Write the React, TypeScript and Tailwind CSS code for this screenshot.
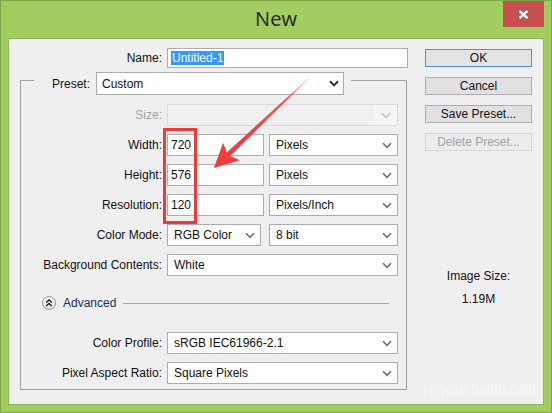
import React from 'react';

type ChevronTone = 'dark' | 'normal' | 'off';

const Chevron = ({ tone = 'normal' }: { tone?: ChevronTone }) => {
  const color = tone === 'dark' ? '#2e2e2e' : tone === 'off' ? '#c2c2c2' : '#6e6e6e';
  return (
    <svg width="10" height="7" viewBox="0 0 10 7" className="shrink-0">
      <path d="M1 1.2 L5 5.4 L9 1.2" fill="none" stroke={color} strokeWidth={tone === 'dark' ? 2 : 1.6} />
    </svg>
  );
};

const Select = ({ value, className }: { value: string; className: string }) => (
  <div className={`flex items-center justify-between border border-[#acacac] bg-white pl-[6px] pr-[5px] ${className}`}>
    <span className="whitespace-nowrap">{value}</span>
    <Chevron />
  </div>
);

const Field = ({ value }: { value: string }) => (
  <div className="flex h-[22px] w-[97px] items-center border border-[#abadb3] bg-white pl-[3px]">{value}</div>
);

const Row = ({ label, children, muted }: { label: string; children: React.ReactNode; muted?: boolean }) => (
  <div className="flex h-[22px] items-center">
    <div className={`w-[141px] text-right whitespace-nowrap ${muted ? 'text-[#a3a3a3]' : ''}`}>{label}</div>
    <div className="ml-[5px] flex h-full items-center">{children}</div>
  </div>
);

const Button = ({ label, kind }: { label: string; kind?: 'default' | 'disabled' }) => {
  const look =
    kind === 'default'
      ? 'border-[#4a8fd8] bg-[#e3e3e3]'
      : kind === 'disabled'
        ? 'border-[#d6d6d6] bg-[#ececec] text-[#a2a2a2]'
        : 'border-[#adadad] bg-[#e1e1e1]';
  return (
    <div className={`flex h-[18px] w-[107px] items-center justify-center border ${look}`}>{label}</div>
  );
};

export default function App() {
  return (
    <div className="relative h-[413px] w-[552px] overflow-hidden font-['Liberation_Sans',Arial,sans-serif] text-[12px] leading-[14px] text-[#111]">
      <div className="flex h-full w-full flex-col border border-[#7da646] bg-[#a2cd5f] px-[7px] pb-[7px]">
        {/* title bar */}
        <div className="grid h-[37px] shrink-0 grid-cols-[1fr_auto_1fr]">
          <div />
          <div className="self-center pb-[1px] font-['Open_Sans',sans-serif] text-[20px] leading-[24px] text-[#222]">New</div>
          <div className="flex h-[26px] w-[41px] items-center justify-center justify-self-end bg-[#c75050]">
            <svg width="11" height="9" viewBox="0 0 11 9">
              <path d="M1.5 0.8 L9.5 8.2 M9.5 0.8 L1.5 8.2" stroke="#fff" strokeWidth="2.3" />
            </svg>
          </div>
        </div>

        {/* client area */}
        <div className="flex flex-1 border border-[#8ab653] bg-[#efefef] pl-[11px] pt-[9px]">
          <div className="w-[388px]">
            <div className="flex h-[20px] items-center">
              <div className="w-[142px] text-right">Name:</div>
              <div className="ml-[5px] flex h-full w-[241px] items-center border border-[#abadb3] bg-white pl-[3px]">
                <span className="bg-[#3399ff] px-[1px] text-white">Untitled-1</span>
              </div>
            </div>

            <fieldset className="mt-[-3px] w-[387px] border border-[#a0a0a0]">
              <legend className="ml-[13px] flex items-center pr-[7px] pt-[7px]">
                <span className="w-[56px] text-right">Preset:</span>
                <div className="ml-[6px] flex h-[23px] w-[248px] items-center justify-between border border-[#acacac] bg-white pl-[5px] pr-[4px]">
                  <span>Custom</span>
                  <Chevron tone="dark" />
                </div>
              </legend>

              <div className="flex flex-col pb-[5px] pt-[9px]">
                <div className="flex flex-col gap-[8px]">
                  <Row label="Size:" muted>
                    <div className="flex h-full w-[231px] border border-[#dadada] bg-[#f0f0f0]">
                      <div className="flex-1" />
                      <div className="flex w-[22px] items-center justify-center bg-[#f4f4f4]">
                        <Chevron tone="off" />
                      </div>
                    </div>
                  </Row>
                  <Row label="Width:">
                    <Field value="720" />
                    <Select value="Pixels" className="ml-[5px] h-full w-[129px]" />
                  </Row>
                  <Row label="Height:">
                    <Field value="576" />
                    <Select value="Pixels" className="ml-[5px] h-full w-[129px]" />
                  </Row>
                  <Row label="Resolution:">
                    <Field value="120" />
                    <Select value="Pixels/Inch" className="ml-[5px] h-full w-[129px]" />
                  </Row>
                  <Row label="Color Mode:">
                    <Select value="RGB Color" className="h-full w-[94px]" />
                    <Select value="8 bit" className="ml-[8px] h-full w-[129px]" />
                  </Row>
                  <Row label="Background Contents:">
                    <Select value="White" className="h-full w-[231px]" />
                  </Row>
                </div>

                <div className="mt-[20px] flex h-[14px] items-center">
                  <div className="ml-[21px] flex h-[14px] w-[14px] items-center justify-center rounded-full border border-[#9a9a9a] bg-gradient-to-b from-white to-[#dedede]">
                    <svg width="8" height="8" viewBox="0 0 8 8">
                      <path d="M1.2 3.6 L4 1 L6.8 3.6 M1.2 7 L4 4.4 L6.8 7" fill="none" stroke="#222" strokeWidth="1.4" />
                    </svg>
                  </div>
                  <span className="ml-[7px] text-[#1d2f5e]">Advanced</span>
                  <div className="ml-[7px] mr-[17px] h-px flex-1 bg-[#a8a8a8]" />
                </div>

                <div className="mt-[22px] flex flex-col gap-[8px]">
                  <Row label="Color Profile:">
                    <Select value="sRGB IEC61966-2.1" className="h-full w-[231px]" />
                  </Row>
                  <Row label="Pixel Aspect Ratio:">
                    <Select value="Square Pixels" className="h-full w-[231px]" />
                  </Row>
                </div>
              </div>
            </fieldset>
          </div>

          <div className="ml-[17px] mt-[1px] flex w-[107px] flex-col items-center">
            <div className="flex flex-col gap-[10px]">
              <Button label="OK" kind="default" />
              <Button label="Cancel" />
              <Button label="Save Preset..." />
              <Button label="Delete Preset..." kind="disabled" />
            </div>
            <div className="mt-[118px]">Image Size:</div>
            <div className="mt-[9px]">1.19M</div>
          </div>
        </div>
      </div>

      {/* annotation: red frame round the size values */}
      <div className="absolute left-[163px] top-[128px] h-[96px] w-[34px] border-[3px] border-[#f03a3a]" />

      {/* annotation: red arrow */}
      <svg className="pointer-events-none absolute left-0 top-0" width="552" height="413" viewBox="0 0 552 413">
        <defs>
          <linearGradient id="arrowFade" gradientUnits="userSpaceOnUse" x1="309" y1="78" x2="245" y2="140">
            <stop offset="0" stopColor="#f03c3c" stopOpacity="0.15" />
            <stop offset="0.35" stopColor="#f03c3c" stopOpacity="0.85" />
            <stop offset="1" stopColor="#f03c3c" stopOpacity="1" />
          </linearGradient>
        </defs>
        <polygon
          points="308.7,77.7 309.3,78.3 230.2,156 239.7,160.2 214,168 223.1,142.8 226.8,152.4"
          fill="url(#arrowFade)"
        />
      </svg>

      {/* faint site watermark */}
      <div className="pointer-events-none absolute left-[423px] top-[381px] font-['Liberation_Sans',sans-serif] text-[14px] leading-[16px] text-[#f7f7f7]">
        jingyan.baidu.com
      </div>
    </div>
  );
}
